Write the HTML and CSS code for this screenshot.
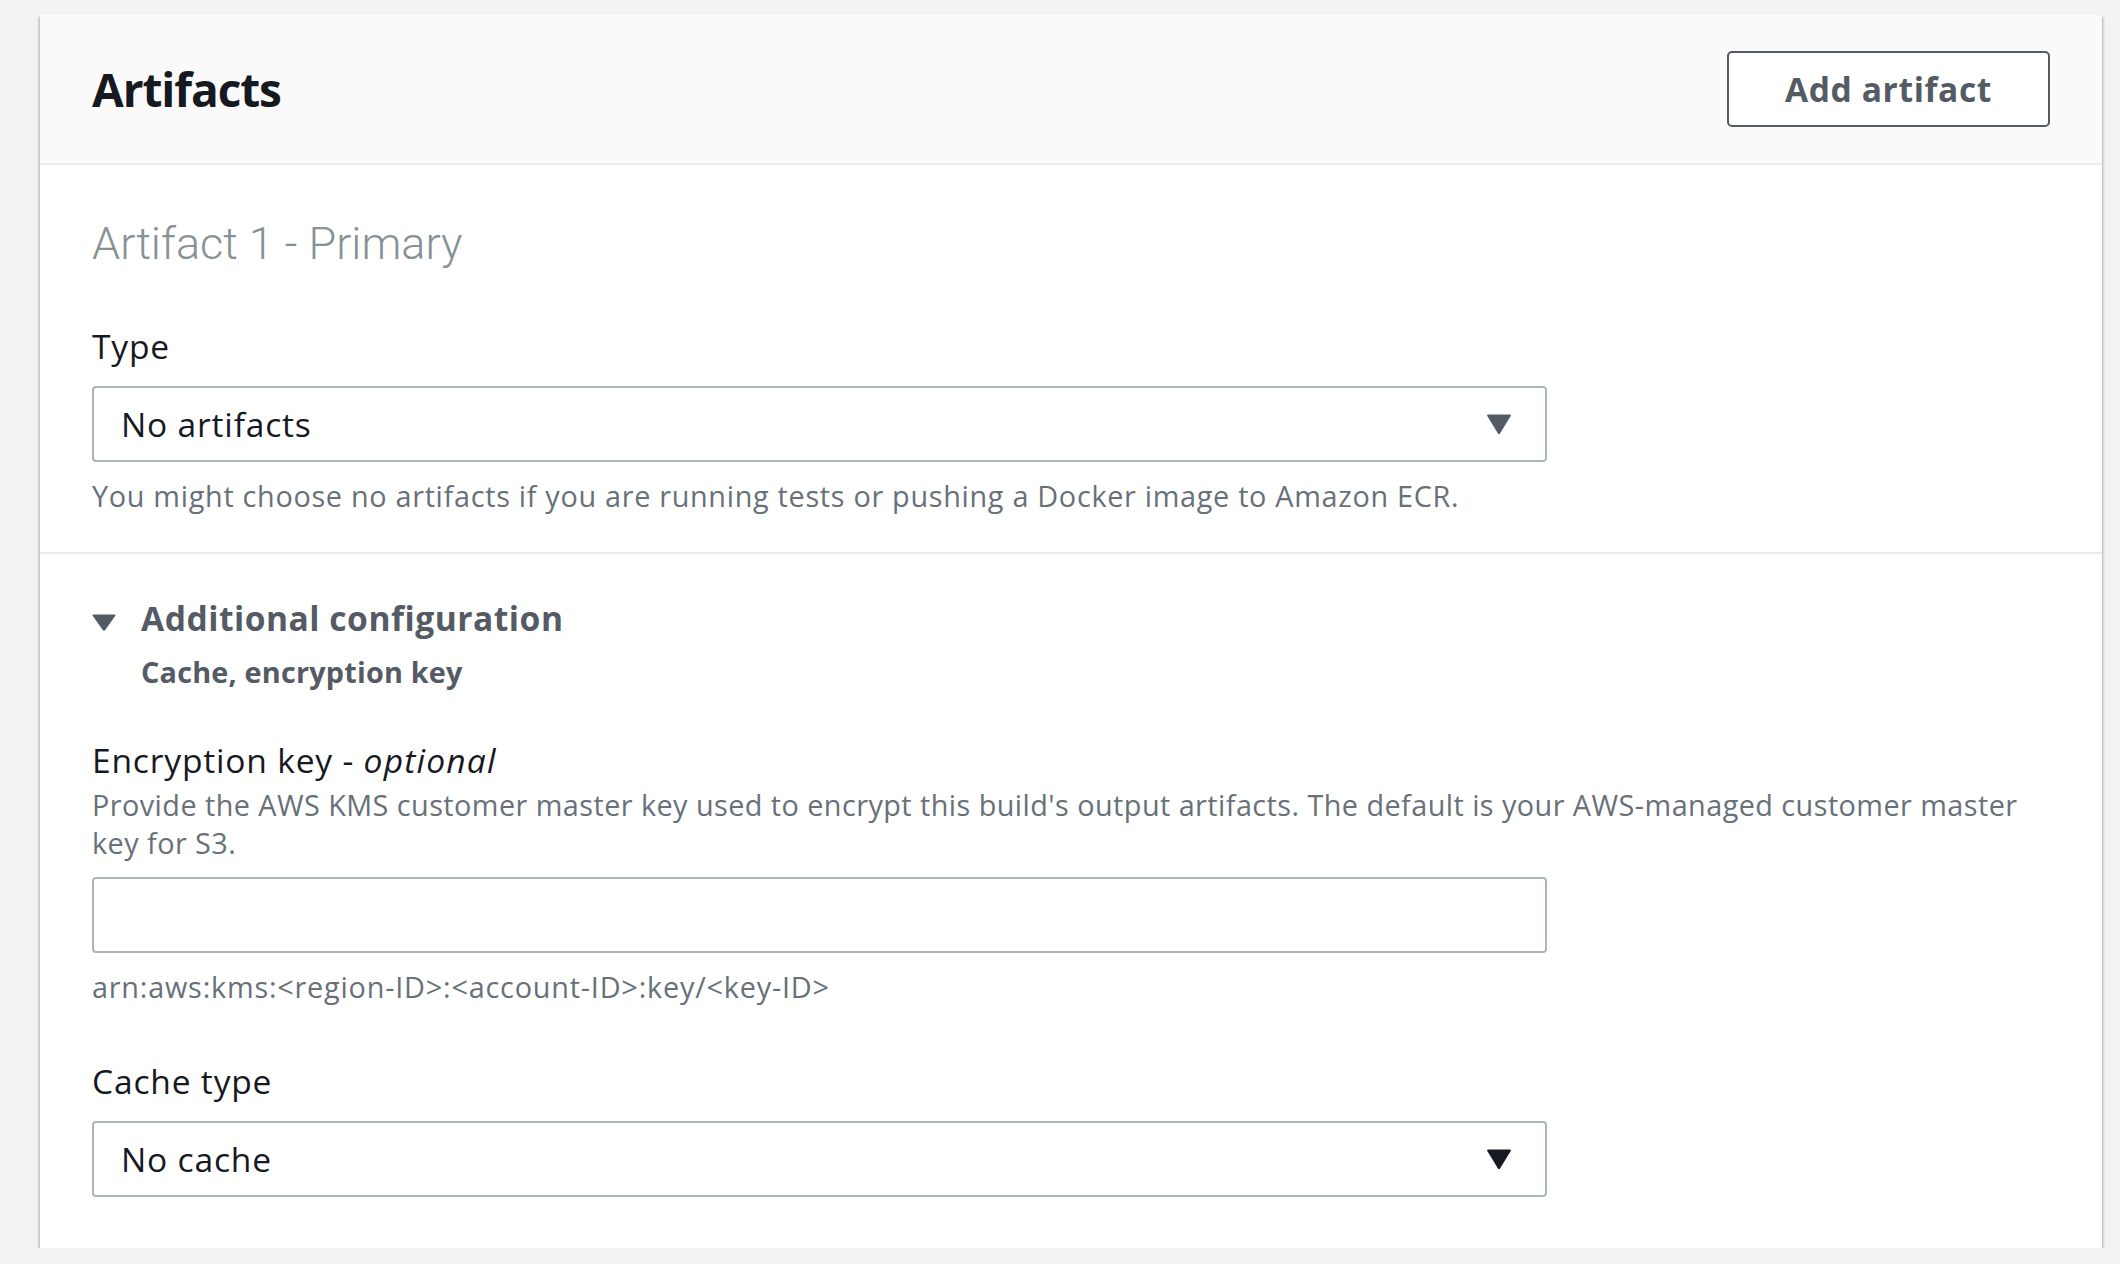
FILE: index.html
```html
<!DOCTYPE html>
<html lang="en">
<head>
<meta charset="utf-8">
<title>Artifacts</title>
<link rel="stylesheet" href="styles.css">
</head>
<body>
<section class="card">
  <header class="card-header">
    <h2 class="card-title">Artifacts</h2>
    <button class="btn" type="button">Add artifact</button>
  </header>

  <div class="card-section">
    <h3 class="subheading">Artifact 1 - Primary</h3>
    <div class="field">
      <div class="label">Type</div>
      <div class="select">
        <span class="select-value">No artifacts</span>
        <svg class="select-arrow" width="26" height="22" viewBox="0 0 26 22"><path d="M2 1.5 H24 Q25.5 1.5 24.7 3 L14.2 20.3 Q13 22 11.8 20.3 L1.3 3 Q0.5 1.5 2 1.5 Z" fill="#545b64"/></svg>
      </div>
      <div class="helper">You might choose no artifacts if you are running tests or pushing a Docker image to Amazon ECR.</div>
    </div>
  </div>

  <div class="card-section card-section-last">
    <div class="expander">
      <svg class="caret" width="24" height="17" viewBox="0 0 24 17"><path d="M1.5 0.5 H22.5 Q24 0.5 23.2 2 L13.2 16 Q12 17.4 10.8 16 L0.8 2 Q0 0.5 1.5 0.5 Z" fill="#545b64"/></svg>
      <div class="expander-text">
        <div class="expander-title">Additional configuration</div>
        <div class="expander-desc">Cache, encryption key</div>
      </div>
    </div>

    <div class="field field-key">
      <div class="label">Encryption key - <em>optional</em></div>
      <div class="description">Provide the AWS KMS customer master key used to encrypt this build's output artifacts. The default is your AWS-managed customer master key for S3.</div>
      <div class="input"></div>
      <div class="hint">arn:aws:kms:&lt;region-ID&gt;:&lt;account-ID&gt;:key/&lt;key-ID&gt;</div>
    </div>

    <div class="field field-cache">
      <div class="label">Cache type</div>
      <div class="select">
        <span class="select-value">No cache</span>
        <svg class="select-arrow" width="26" height="22" viewBox="0 0 26 22"><path d="M2 1.5 H24 Q25.5 1.5 24.7 3 L14.2 20.3 Q13 22 11.8 20.3 L1.3 3 Q0.5 1.5 2 1.5 Z" fill="#16191f"/></svg>
      </div>
    </div>
  </div>
</section>
</body>
</html>
```

FILE: styles.css
```css
* { box-sizing: border-box; }

html, body {
  margin: 0;
  background: #f2f3f3;
}

body {
  padding: 15px 18px 0 40px;
  font-family: "Open Sans", "Noto Sans", sans-serif;
  color: #16191f;
}

.card {
  background: #ffffff;
  box-shadow: 0 2px 2px rgba(0, 28, 36, 0.3), 2px 2px 2px rgba(0, 28, 36, 0.12), -2px 2px 2px rgba(0, 28, 36, 0.12);
}

.card-header {
  height: 150px;
  background: #fafafa;
  border-bottom: 2px solid #eaeded;
  padding: 0 52px;
  display: flex;
  align-items: center;
  justify-content: space-between;
}

.card-title {
  margin: 0;
  font-size: 46px;
  font-weight: 700;
  line-height: 56px;
  letter-spacing: -1.1px;
  color: #16191f;
}

.btn {
  height: 76px;
  padding: 0 56px;
  background: #ffffff;
  border: 2px solid #545b64;
  border-radius: 5px;
  font-family: "Open Sans", "Noto Sans", sans-serif;
  font-size: 33.6px;
  font-weight: 700;
  color: #545b64;
  letter-spacing: 0.6px;
}

.card-section {
  padding: 51px 52px 37px;
  border-bottom: 2px solid #eaeded;
}

.card-section-last {
  padding: 40px 52px 51px;
  border-bottom: none;
}

.subheading {
  margin: 0 0 50px;
  font-family: Roboto, "Liberation Sans", sans-serif;
  font-weight: 300;
  font-size: 45px;
  line-height: 56px;
  color: #879196;
}

.field {
  display: flex;
  flex-direction: column;
  align-items: flex-start;
}

.label {
  font-size: 33.6px;
  line-height: 48px;
  letter-spacing: 0.8px;
  color: #16191f;
  margin-bottom: 16px;
}

.label em {
  font-style: italic;
  letter-spacing: 1.2px;
}

.field-key .label {
  margin-bottom: 2px;
}

.select,
.input {
  width: 1455px;
  height: 76px;
  border: 2px solid #aab7b8;
  border-radius: 4px;
  background: #ffffff;
}

.select {
  display: flex;
  align-items: center;
  justify-content: space-between;
  padding: 0 33px 0 27px;
}

.select-value {
  font-size: 33.6px;
  letter-spacing: 0.8px;
  color: #16191f;
}

.helper {
  margin-top: 15px;
  font-size: 28.8px;
  line-height: 38px;
  letter-spacing: 0.7px;
  color: #687078;
}

.expander {
  display: flex;
  align-items: flex-start;
  gap: 25px;
}

.caret {
  margin-top: 20px;
  flex: none;
}

.expander-title {
  font-size: 33.6px;
  font-weight: 700;
  line-height: 48px;
  letter-spacing: 0.5px;
  color: #545b64;
}

.expander-desc {
  margin-top: 11px;
  font-size: 28.8px;
  font-weight: 700;
  line-height: 38px;
  letter-spacing: 0.2px;
  color: #545b64;
}

.field-key {
  margin-top: 45px;
}

.description {
  font-size: 28.8px;
  line-height: 38px;
  letter-spacing: 0.45px;
  color: #687078;
}

.input {
  margin-top: 15px;
}

.hint {
  margin-top: 15px;
  font-size: 28.8px;
  line-height: 38px;
  letter-spacing: 0.8px;
  color: #687078;
}

.field-cache {
  margin-top: 51px;
}
```
